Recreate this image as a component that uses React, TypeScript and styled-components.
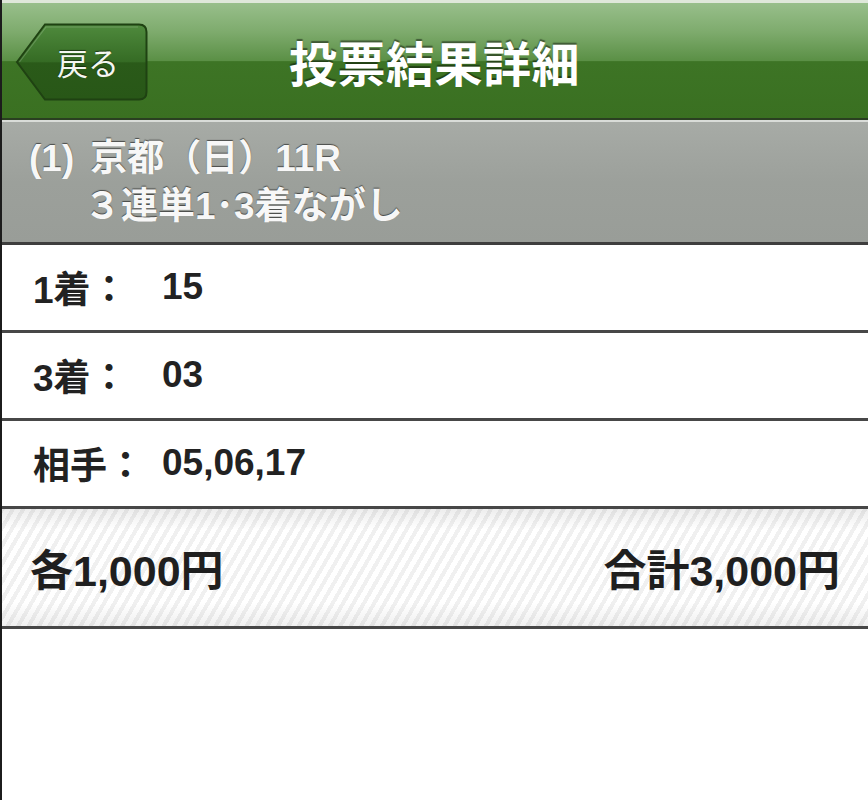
import styled, { createGlobalStyle } from 'styled-components';

const GlobalStyle = createGlobalStyle`
  html, body {
    margin: 0;
    padding: 0;
    background: #ffffff;
  }
  body {
    font-family: "Liberation Sans", "Noto Sans CJK JP", sans-serif;
  }
`;

const Screen = styled.div`
  width: 868px;
  min-height: 800px;
  background: #ffffff;
  border-left: 2px solid #1c1c1c;
  box-sizing: border-box;
  display: flex;
  flex-direction: column;
`;

const NavBar = styled.header`
  height: 120px;
  display: flex;
  align-items: center;
  padding-left: 13px;
  gap: 140px;
  border-top: 3px solid #dfe8da;
  border-bottom: 2px solid #2a3f21;
  background: linear-gradient(
    to bottom,
    #98bf8b 0%,
    #7eab6d 25%,
    #5b9046 50%,
    #3d7425 51%,
    #3a7021 100%
  );
  box-sizing: border-box;
`;

const BackButton = styled.button`
  position: relative;
  height: 80px;
  width: 134px;
  margin-top: 2px;
  border: none;
  padding: 0 0 0 12px;
  background: none;
  cursor: pointer;
  display: flex;
  align-items: center;
  justify-content: center;
  color: #f4f7f2;
  font-family: "Noto Sans CJK JP", sans-serif;
  font-size: 31px;
  font-weight: 400;
  text-shadow: 0 -1px 1px rgba(0, 0, 0, 0.5);

  svg {
    position: absolute;
    inset: 0;
    z-index: 0;
  }
  span {
    position: relative;
    z-index: 1;
  }
`;

const Title = styled.h1`
  margin: 0;
  color: #ffffff;
  font-family: "Noto Sans CJK JP", sans-serif;
  font-size: 48px;
  font-weight: 700;
  letter-spacing: 0.5px;
  text-shadow: 0 -2px 1px rgba(0, 0, 0, 0.45);
`;

const RaceHeader = styled.section`
  height: 125px;
  padding: 13px 0 0 27px;
  box-sizing: border-box;
  border-top: 2px solid #d9dcd8;
  border-bottom: 3px solid #3e3e3e;
  background: linear-gradient(to bottom, #a7aba6 0%, #9ca09b 50%, #999d98 100%);
  color: #f7f7f7;
  font-weight: 700;
  text-shadow: 0 -1px 1px rgba(0, 0, 0, 0.55);
`;

const RaceLine = styled.div<{ $indent?: number }>`
  font-size: 37px;
  line-height: 48px;
  white-space: nowrap;
  padding-left: ${({ $indent }) => $indent ?? 0}px;
`;

const RaceNo = styled.span`
  margin-right: 16px;
`;

const Row = styled.div`
  height: 88px;
  display: flex;
  align-items: center;
  padding: 0 0 2px 31px;
  box-sizing: border-box;
  border-bottom: 3px solid #474747;
  color: #222222;
  font-size: 37px;
  font-weight: 700;
`;

const Label = styled.span`
  width: 129px;
  flex-shrink: 0;
`;

const Totals = styled.div`
  height: 120px;
  display: flex;
  align-items: center;
  justify-content: space-between;
  padding: 0 28px 2px 28px;
  box-sizing: border-box;
  border-bottom: 3px solid #474747;
  color: #1f1f1f;
  font-size: 43px;
  font-weight: 700;
  background:
    linear-gradient(
      to bottom,
      rgba(0, 0, 0, 0.07) 0%,
      rgba(0, 0, 0, 0) 18%,
      rgba(0, 0, 0, 0) 80%,
      rgba(0, 0, 0, 0.06) 100%
    ),
    repeating-linear-gradient(
      -60deg,
      #ffffff 0px,
      #ffffff 5px,
      #f0f0f0 5px,
      #f0f0f0 9px
    );
`;

const rows = [
  { label: '1着：', value: '15' },
  { label: '3着：', value: '03' },
  { label: '相手：', value: '05,06,17' },
];

function BackShape() {
  return (
    <svg width="134" height="80" viewBox="0 0 134 80">
      <defs>
        <linearGradient id="backFill" x1="0" y1="0" x2="0" y2="1">
          <stop offset="0" stopColor="#4f8a3d" />
          <stop offset="0.5" stopColor="#356b24" />
          <stop offset="0.51" stopColor="#2a5a19" />
          <stop offset="1" stopColor="#285717" />
        </linearGradient>
      </defs>
      <path
        d="M2 40 L30 2.5 H124 Q131.5 2.5 131.5 10 V70 Q131.5 77.5 124 77.5 H30 Z"
        fill="url(#backFill)"
        stroke="#1f4212"
        strokeWidth="2"
      />
      <path
        d="M4.5 40 L31 5 H123"
        fill="none"
        stroke="rgba(255,255,255,0.18)"
        strokeWidth="1.2"
      />
    </svg>
  );
}

export default function App() {
  return (
    <>
      <GlobalStyle />
      <Screen>
        <NavBar>
          <BackButton>
            <BackShape />
            <span>戻る</span>
          </BackButton>
          <Title>投票結果詳細</Title>
        </NavBar>

        <RaceHeader>
          <RaceLine>
            <RaceNo>(1)</RaceNo>京都（日）11R
          </RaceLine>
          <RaceLine $indent={55}>３連単1･3着ながし</RaceLine>
        </RaceHeader>

        {rows.map((r) => (
          <Row key={r.label}>
            <Label>{r.label}</Label>
            <span>{r.value}</span>
          </Row>
        ))}

        <Totals>
          <span>各1,000円</span>
          <span>合計3,000円</span>
        </Totals>
      </Screen>
    </>
  );
}
